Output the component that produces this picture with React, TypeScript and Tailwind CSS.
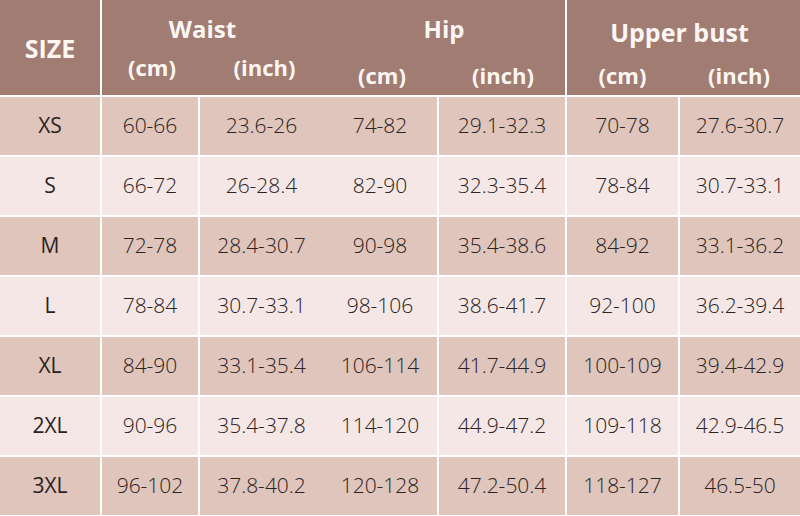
const rows = [
  ["XS", "60-66", "23.6-26", "74-82", "29.1-32.3", "70-78", "27.6-30.7"],
  ["S", "66-72", "26-28.4", "82-90", "32.3-35.4", "78-84", "30.7-33.1"],
  ["M", "72-78", "28.4-30.7", "90-98", "35.4-38.6", "84-92", "33.1-36.2"],
  ["L", "78-84", "30.7-33.1", "98-106", "38.6-41.7", "92-100", "36.2-39.4"],
  ["XL", "84-90", "33.1-35.4", "106-114", "41.7-44.9", "100-109", "39.4-42.9"],
  ["2XL", "90-96", "35.4-37.8", "114-120", "44.9-47.2", "109-118", "42.9-46.5"],
  ["3XL", "96-102", "37.8-40.2", "120-128", "47.2-50.4", "118-127", "46.5-50"],
];

// which body columns get a white divider on the left
const widths = ["w-[100px]", "w-[98px]", "w-[125px]", "w-[114px]", "w-[128px]", "w-[113px]", "w-[122px]"];
const divided = [false, true, true, false, true, true, true];

export default function App() {
  return (
    <div
      className="w-[800px] h-[516px] bg-white text-[#2b2222]"
      style={{ fontFamily: '"Open Sans", "Noto Sans", sans-serif' }}
    >
      {/* header */}
      <div className="flex h-[95px] bg-[#a07c73] text-[#fdf6f2] font-bold">
        <div className="w-[100px] flex items-center justify-center text-[25px] pt-0.5">SIZE</div>

        <div className="w-[223px] border-l-2 border-white flex flex-col">
          <div className="h-[58px] flex items-center justify-center pr-5 text-[24px]">Waist</div>
          <div className="flex text-[22px] -mt-[7px]">
            <div className="w-[100px] text-center">(cm)</div>
            <div className="flex-1 text-center pl-1">(inch)</div>
          </div>
        </div>

        <div className="w-[242px] flex flex-col">
          <div className="h-[58px] flex items-center justify-center text-[24px]">Hip</div>
          <div className="flex text-[22px] mt-px">
            <div className="w-[114px] text-center pl-1">(cm)</div>
            <div className="flex-1 text-center pl-1">(inch)</div>
          </div>
        </div>

        <div className="w-[235px] border-l-2 border-white flex flex-col">
          <div className="h-[62px] flex items-center justify-center pr-2 pt-1 text-[25px]">Upper bust</div>
          <div className="flex text-[22px] -mt-[3px]">
            <div className="w-[111px] text-center">(cm)</div>
            <div className="flex-1 text-center">(inch)</div>
          </div>
        </div>
      </div>

      {/* body */}
      {rows.map((row, i) => (
        <div
          key={row[0]}
          className={`flex h-[60px] border-t-2 border-white ${i % 2 === 0 ? "bg-[#dfc5bb]" : "bg-[#f4e7e5]"}`}
        >
          {row.map((cell, j) => (
            <div
              key={j}
              className={`${widths[j]} flex items-center justify-center text-[21px] ${
                j === 0 ? "font-normal" : "font-light"
              } ${divided[j] ? "border-l-2 border-white" : ""}`}
            >
              {cell}
            </div>
          ))}
        </div>
      ))}
    </div>
  );
}
